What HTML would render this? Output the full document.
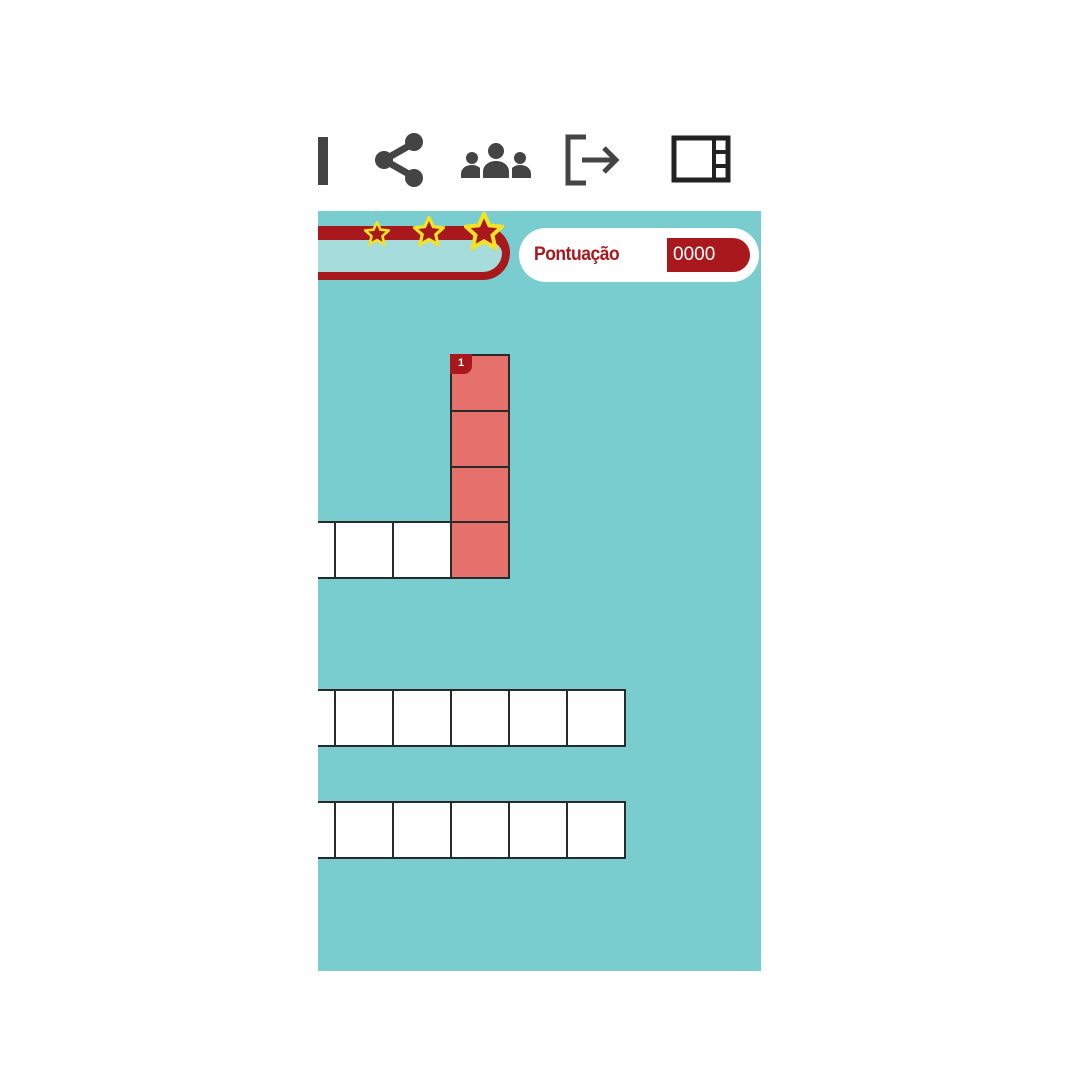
<!DOCTYPE html>
<html><head><meta charset="utf-8"><style>
body{margin:0;width:1080px;height:1080px;background:#fff;position:relative;overflow:hidden;font-family:"Liberation Sans",sans-serif}
.p{position:absolute;left:318px;top:211px;width:443px;height:760px;background:#79cdcf;overflow:hidden}
.c{position:absolute;width:56px;height:54px;background:#fff;border:2px solid #2a2a2a;box-sizing:content-box}
.r{background:#e5706c}
.ic{position:absolute}
</style></head><body>
<div class="ic" style="left:318px;top:137px;width:10px;height:48px;background:#444"></div>
<svg class="ic" style="left:370px;top:130px" width="60" height="60" viewBox="0 0 60 60"><g fill="#444" stroke="#444" stroke-width="7"><line x1="14" y1="30" x2="44" y2="13"/><line x1="14" y1="30" x2="44" y2="47"/></g><circle cx="44" cy="12" r="9" fill="#444"/><circle cx="14" cy="30" r="9" fill="#444"/><circle cx="44" cy="48" r="9" fill="#444"/></svg>
<svg class="ic" style="left:460px;top:142px" width="72" height="40" viewBox="0 0 72 40"><g fill="#444"><circle cx="36" cy="9" r="8"/><path d="M23 36v-6c0-7 6-11 13-11s13 4 13 11v6z"/><circle cx="12" cy="16" r="6"/><path d="M1 36v-4c0-5 4-9 11-9 3 0 6 1 8 3v10z"/><circle cx="60" cy="16" r="6"/><path d="M71 36v-4c0-5-4-9-11-9-3 0-6 1-8 3v10z"/></g></svg>
<svg class="ic" style="left:562px;top:133px" width="62" height="54" viewBox="0 0 62 54"><g fill="none" stroke="#444" stroke-width="5"><path d="M24 4H6v46h18"/><path d="M20 27h33M42 15l12 12-12 12"/></g></svg>
<svg class="ic" style="left:670px;top:134px" width="62" height="50" viewBox="0 0 62 50"><rect x="4" y="4" width="54" height="42" fill="none" stroke="#222" stroke-width="5"/><line x1="44" y1="4" x2="44" y2="46" stroke="#222" stroke-width="4"/><line x1="44" y1="18" x2="58" y2="18" stroke="#222" stroke-width="4"/><line x1="44" y1="32" x2="58" y2="32" stroke="#222" stroke-width="4"/></svg>
<div class="p">
<div style="position:absolute;left:-30px;top:15px;width:222px;height:54px;border:8px solid #a8181c;border-radius:30px;background:#a6dcdc;box-sizing:border-box;border-top-width:14px"></div>
<svg style="position:absolute;left:46px;top:10px" width="26" height="26" viewBox="0 0 24 24"><path d="M12 1l3.2 7 7.6.8-5.7 5.1 1.6 7.5L12 17.6 5.3 21.4l1.6-7.5L1.2 8.8 8.8 8z" fill="#a8181c" stroke="#f2e326" stroke-width="2.4"/></svg>
<svg style="position:absolute;left:95px;top:5px" width="32" height="32" viewBox="0 0 24 24"><path d="M12 1l3.2 7 7.6.8-5.7 5.1 1.6 7.5L12 17.6 5.3 21.4l1.6-7.5L1.2 8.8 8.8 8z" fill="#a8181c" stroke="#f2e326" stroke-width="2.4"/></svg>
<svg style="position:absolute;left:146px;top:1px" width="40" height="40" viewBox="0 0 24 24"><path d="M12 1l3.2 7 7.6.8-5.7 5.1 1.6 7.5L12 17.6 5.3 21.4l1.6-7.5L1.2 8.8 8.8 8z" fill="#a8181c" stroke="#f2e326" stroke-width="2.4"/></svg>
<div style="position:absolute;left:201px;top:17px;width:240px;height:54px;background:#fff;border-radius:28px"></div>
<div style="position:absolute;left:216px;top:33px;font-size:19px;font-weight:bold;color:#a8181c;letter-spacing:-0.5px;transform:scaleX(0.92);transform-origin:left">Pontuação</div>
<div style="position:absolute;left:349px;top:27px;width:83px;height:34px;background:#a8181c;border-radius:0 18px 18px 0;color:#fff;font-size:19px;line-height:34px;padding-left:6px;box-sizing:border-box">0000</div>
</div>
<div class="c r" style="left:450px;top:354px"></div>
<div style="position:absolute;left:450px;top:354px;width:22px;height:20px;background:#a8181c;border-radius:0 0 8px 0;color:#fff;font-size:11px;font-weight:bold;text-align:center;line-height:18px">1</div>
<div class="c r" style="left:450px;top:410px"></div>
<div class="c r" style="left:450px;top:466px"></div>
<div class="c r" style="left:450px;top:521px"></div>
<div class="c" style="left:276px;top:521px"></div><div class="c" style="left:334px;top:521px"></div><div class="c" style="left:392px;top:521px"></div>
<div class="c" style="left:276px;top:689px"></div><div class="c" style="left:334px;top:689px"></div><div class="c" style="left:392px;top:689px"></div><div class="c" style="left:450px;top:689px"></div><div class="c" style="left:508px;top:689px"></div><div class="c" style="left:566px;top:689px"></div>
<div class="c" style="left:276px;top:801px"></div><div class="c" style="left:334px;top:801px"></div><div class="c" style="left:392px;top:801px"></div><div class="c" style="left:450px;top:801px"></div><div class="c" style="left:508px;top:801px"></div><div class="c" style="left:566px;top:801px"></div>
<div style="position:absolute;left:0;top:211px;width:318px;height:760px;background:#fff"></div>
</body></html>
